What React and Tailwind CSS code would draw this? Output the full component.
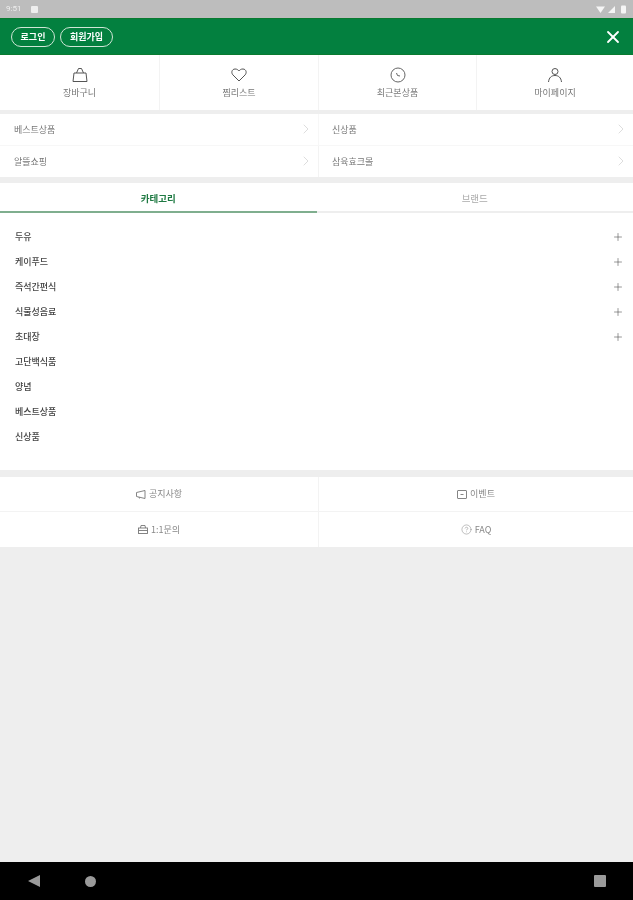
import { useState } from "react";
import { X, Plus, ChevronRight, CircleHelp } from "lucide-react";

const font = "font-['Noto_Sans_CJK_KR','Noto_Sans',sans-serif]";

const BagIcon = () => (
  <svg width="18" height="16" viewBox="0 0 18 16" fill="none" stroke="#555" strokeWidth="1">
    <path d="M2 14.5 L3 6 L15 6 L16 14.5 Z" />
    <path d="M5.5 6 L7.5 1.5 L10.5 1.5 L12.5 6" />
  </svg>
);

const HeartIcon = () => (
  <svg width="16" height="14" viewBox="0 0 16 14" fill="none" stroke="#555" strokeWidth="1">
    <path d="M8 13 L2 7 C0 5 0.6 1.2 4 1 C6 0.9 7.2 2 8 3 C8.8 2 10 0.9 12 1 C15.4 1.2 16 5 14 7 Z" />
  </svg>
);

const RecentIcon = () => (
  <svg width="16" height="16" viewBox="0 0 16 16" fill="none" stroke="#666" strokeWidth="1">
    <circle cx="8" cy="8" r="7" />
    <path d="M6.5 6 L7.5 8.5 L10 9" />
  </svg>
);

const UserIcon = () => (
  <svg width="16" height="16" viewBox="0 0 16 16" fill="none" stroke="#555" strokeWidth="1">
    <circle cx="8" cy="4.5" r="3" />
    <path d="M1.5 15 C2 10.5 4.5 8.5 8 8.5 C11.5 8.5 14 10.5 14.5 15" />
  </svg>
);

const NoticeIcon = () => (
  <svg width="10" height="9" viewBox="0 0 10 9" fill="none" stroke="#777" strokeWidth="0.9">
    <path d="M0.5 2.5 L9 0.5 L9 8.5 L0.5 6.5 Z" />
    <path d="M3 7 L3.5 8.5" />
  </svg>
);

const EventIcon = () => (
  <svg width="10" height="9" viewBox="0 0 10 9" fill="none" stroke="#777" strokeWidth="0.9">
    <rect x="0.5" y="0.5" width="9" height="8" rx="0.5" />
    <path d="M3.5 4.5 L6.5 4.5" />
  </svg>
);

const InquiryIcon = () => (
  <svg width="10" height="9" viewBox="0 0 10 9" fill="none" stroke="#777" strokeWidth="0.9">
    <rect x="0.5" y="3" width="9" height="5.5" />
    <path d="M2.5 3 L3 0.5 L7 0.5 L7.5 3 M0.5 5.5 L9.5 5.5" />
  </svg>
);

const topMenu = [
  { label: "장바구니", icon: <BagIcon /> },
  { label: "찜리스트", icon: <HeartIcon /> },
  { label: "최근본상품", icon: <RecentIcon /> },
  { label: "마이페이지", icon: <UserIcon /> },
];

const quickLinks = ["베스트상품", "신상품", "알뜰쇼핑", "삼육효크몰"];

const categories = [
  { label: "두유", more: true },
  { label: "케이푸드", more: true },
  { label: "즉석간편식", more: true },
  { label: "식물성음료", more: true },
  { label: "초대장", more: true },
  { label: "고단백식품" },
  { label: "양념" },
  { label: "베스트상품" },
  { label: "신상품" },
];

const App = () => {
  const [tab, setTab] = useState("category");

  return (
    <div className={`flex h-[900px] w-full flex-col overflow-hidden bg-[#eeeeee] blur-[0.45px] ${font}`}>
      {/* android status bar */}
      <div className="flex h-[18px] items-center justify-between bg-[#bdbdbd] pl-[6px] pr-[5px]">
        <div className="flex items-center gap-[10px]">
          <span className="font-['Roboto',sans-serif] text-[8px] text-[#eeeeee]">9:51</span>
          <span className="h-[7px] w-[7px] rounded-[1px] bg-[#eeeeee]" />
        </div>
        <svg width="32" height="9" viewBox="0 0 32 9" fill="#f5f5f5">
          <path d="M0 1.5 L9 1.5 L4.5 8 Z" />
          <path d="M12 8 L19 8 L19 1 Z" />
          <rect x="25" y="0.5" width="5" height="8" rx="1" />
        </svg>
      </div>

      {/* green header */}
      <header className="flex h-[37px] items-center justify-between border-y border-[#0a7a30] bg-[#03803f] pl-[11px] pr-[10px]">
        <div className="flex items-center gap-[5px]">
          <button className="flex h-[20px] w-[44px] items-center justify-center rounded-full border border-[#cfe6d6] text-[9px] font-bold text-white">
            로그인
          </button>
          <button className="flex h-[20px] w-[53px] items-center justify-center rounded-full border border-[#cfe6d6] text-[9px] font-bold text-white">
            회원가입
          </button>
        </div>
        <X size={20} strokeWidth={2.2} className="text-white" />
      </header>

      {/* top menu */}
      <nav className="grid h-[55px] grid-cols-[160px_159px_158px_1fr] bg-white">
        {topMenu.map((item, i) => (
          <div
            key={item.label}
            className={`flex flex-col items-center pt-[11px] ${i < 3 ? "border-r border-[#f3f3f3]" : ""}`}
          >
            <div className="flex h-[17px] items-center">{item.icon}</div>
            <span className="mt-[3px] text-[9px] leading-[14px] text-[#777777]">{item.label}</span>
          </div>
        ))}
      </nav>

      {/* quick links */}
      <div className="mt-[4px] grid h-[63px] grid-cols-[319px_1fr] grid-rows-2 bg-white">
        {quickLinks.map((label, i) => (
          <div
            key={label}
            className={`flex items-center justify-between pr-[4px] ${i % 2 === 0 ? "border-r border-[#f3f3f3] pl-[14px]" : "pl-[13px]"} ${i < 2 ? "border-b border-[#f7f7f7]" : ""}`}
          >
            <span className="text-[9px] text-[#777777]">{label}</span>
            <ChevronRight size={16} strokeWidth={1} className="text-[#cccccc]" />
          </div>
        ))}
      </div>

      {/* tabs */}
      <div className="mt-[6px] grid h-[30px] grid-cols-2 bg-white">
        <button
          onClick={() => setTab("category")}
          className={`pt-[3px] text-[9.5px] ${tab === "category" ? "border-b-2 border-[#7fae8e] font-bold text-[#1f7a43]" : "border-b-2 border-[#eeeeee] text-[#aaaaaa]"}`}
        >
          카테고리
        </button>
        <button
          onClick={() => setTab("brand")}
          className={`pt-[3px] text-[9.5px] ${tab === "brand" ? "border-b-2 border-[#7fae8e] font-bold text-[#1f7a43]" : "border-b-2 border-[#eeeeee] text-[#aaaaaa]"}`}
        >
          브랜드
        </button>
      </div>

      {/* category list */}
      <ul className="h-[257px] bg-white pt-[11px]">
        {categories.map((cat) => (
          <li key={cat.label} className="flex h-[25px] items-center justify-between pl-[15px] pr-[9px]">
            <span className="text-[9px] font-medium text-[#444444]">{cat.label}</span>
            {cat.more && <Plus size={12} strokeWidth={1.1} className="text-[#444444]" />}
          </li>
        ))}
      </ul>

      {/* bottom links */}
      <div className="mt-[7px] grid h-[70px] grid-cols-[319px_1fr] grid-rows-2 bg-white">
        <div className="flex items-center justify-center gap-[3px] border-r border-b border-[#f3f3f3] text-[9px] text-[#888888]">
          <NoticeIcon />
          공지사항
        </div>
        <div className="flex items-center justify-center gap-[3px] border-b border-[#f3f3f3] text-[9px] text-[#888888]">
          <EventIcon />
          이벤트
        </div>
        <div className="flex items-center justify-center gap-[3px] border-r border-[#f3f3f3] text-[9px] text-[#888888]">
          <InquiryIcon />
          1:1문의
        </div>
        <div className="flex items-center justify-center gap-[3px] text-[9px] text-[#888888]">
          <CircleHelp size={11} strokeWidth={1} className="text-[#777777]" />
          FAQ
        </div>
      </div>

      <div className="flex-1" />

      {/* android nav bar */}
      <div className="flex h-[38px] items-center justify-between bg-black pl-[28px] pr-[27px]">
        <div className="flex items-center gap-[45px]">
          <svg width="12" height="12" viewBox="0 0 12 12" fill="#9a9a9a">
            <path d="M0 6 L12 0 L12 12 Z" />
          </svg>
          <span className="h-[11px] w-[11px] rounded-full bg-[#9a9a9a]" />
        </div>
        <span className="h-[12px] w-[12px] rounded-[1px] bg-[#9a9a9a]" />
      </div>
    </div>
  );
};

export default App;
